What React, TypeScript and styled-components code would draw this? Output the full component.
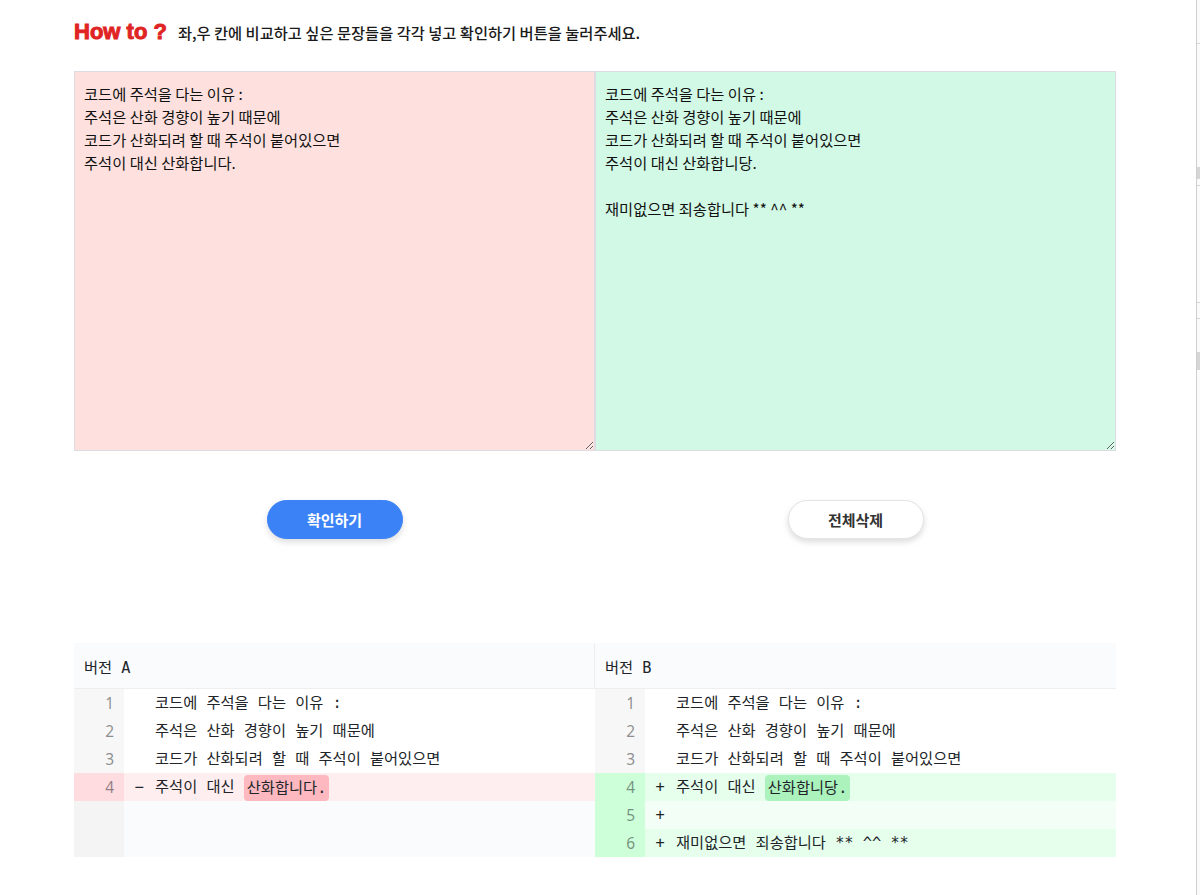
import React from "react";
import styled, { createGlobalStyle } from "styled-components";

const GlobalStyle = createGlobalStyle`
  html, body { margin: 0; padding: 0; background: #ffffff; }
  body {
    font-family: "Noto Sans CJK KR", "Noto Sans", sans-serif;
    color: #111111;
  }
  * { box-sizing: border-box; }
`;

const Page = styled.main`
  width: 1042px;
  margin-left: 74px;
  padding-top: 20px;
`;

const TitleRow = styled.header`
  display: flex;
  align-items: baseline;
  gap: 11px;
  height: 24px;
  margin-bottom: 27px;
`;

const HowTo = styled.h1`
  margin: 0;
  font-family: "Liberation Sans", Arial, sans-serif;
  font-weight: 700;
  font-size: 22px;
  line-height: 24px;
  color: #e02424;
  -webkit-text-stroke: 1px #e02424;
  letter-spacing: 0px;
`;

const Guide = styled.p`
  margin: 0;
  font-family: "Noto Sans CJK KR", sans-serif;
  font-size: 15.3px;
  font-weight: 500;
  color: #1a1a1a;
`;

const Editors = styled.section`
  display: grid;
  grid-template-columns: 1fr 1fr;
  height: 380px;
`;

const Editor = styled.textarea<{ $tone: "red" | "green" }>`
  display: block;
  width: 100%;
  height: 100%;
  margin: 0;
  padding: 10px 9px;
  border: 1px solid #dcdce2;
  outline: none;
  resize: both;
  background: ${(p) => (p.$tone === "red" ? "#fee1de" : "#d1f9e6")};
  font-family: "Noto Sans CJK KR", sans-serif;
  font-size: 15.3px;
  line-height: 23px;
  color: #111111;
`;

const Actions = styled.div`
  display: grid;
  grid-template-columns: 1fr 1fr;
  justify-items: center;
  padding-top: 49px;
`;

const PillButton = styled.button<{ $primary?: boolean }>`
  width: 136px;
  height: 39px;
  border-radius: 20px;
  border: 1px solid ${(p) => (p.$primary ? "#3b82f6" : "#e4e4e7")};
  background: ${(p) => (p.$primary ? "#3b82f6" : "#ffffff")};
  color: ${(p) => (p.$primary ? "#ffffff" : "#333333")};
  font-family: "Noto Sans CJK KR", sans-serif;
  font-size: 15px;
  font-weight: 700;
  box-shadow: 0 3px 6px rgba(0, 0, 0, 0.14);
  cursor: pointer;
`;

const Diff = styled.section`
  margin-top: 104px;
  display: grid;
  grid-template-columns: 50px 28px 1fr 50px 28px 1fr;
  font-family: "DejaVu Sans Mono", "Noto Sans CJK KR", monospace;
  font-size: 15.3px;
  color: #212529;
`;

const TitleCell = styled.div<{ $divider?: boolean }>`
  grid-column: span 3;
  height: 46px;
  display: flex;
  align-items: center;
  padding-left: 10px;
  background: #fafbfc;
  border-bottom: 1px solid #eeeeee;
  border-right: ${(p) => (p.$divider ? "1px solid #eeeeee" : "none")};
`;

type Kind = "same" | "removed" | "added" | "addedEmpty" | "empty";

const gutterBg: Record<Kind, string> = {
  same: "#f7f7f7",
  removed: "#ffdce0",
  added: "#cdffd8",
  addedEmpty: "#cdffd8",
  empty: "#f4f4f4",
};

const lineBg: Record<Kind, string> = {
  same: "#ffffff",
  removed: "#ffeef0",
  added: "#e6ffed",
  addedEmpty: "#f3fff6",
  empty: "#fafbfc",
};

const Gutter = styled.div<{ $kind: Kind }>`
  height: 28px;
  line-height: 28px;
  padding-right: 10px;
  text-align: right;
  font-family: "Noto Sans", "DejaVu Sans", sans-serif;
  font-size: 15.5px;
  background: ${(p) => gutterBg[p.$kind]};
  color: rgba(33, 37, 41, 0.5);
`;

const Marker = styled.div<{ $kind: Kind }>`
  height: 28px;
  line-height: 28px;
  text-align: center;
  padding-left: 2px;
  background: ${(p) => lineBg[p.$kind]};
`;

const Content = styled.div<{ $kind: Kind }>`
  height: 28px;
  line-height: 28px;
  padding-left: 3px;
  white-space: pre;
  overflow: hidden;
  background: ${(p) => lineBg[p.$kind]};
`;

const Word = styled.span<{ $tone: "red" | "green" }>`
  display: inline-block;
  line-height: 22px;
  padding: 2px 3px;
  border-radius: 4px;
  vertical-align: middle;
  background: ${(p) => (p.$tone === "red" ? "#fdb8c0" : "#acf2bd")};
`;

const EdgeStrip = styled.div`
  position: fixed;
  top: 0;
  right: 0;
  width: 4px;
  height: 100%;
  border-left: 1px solid #cfcfcf;
  background: #fbfbfb;
`;

const EdgeMark = styled.div<{ $top: number; $h: number }>`
  position: absolute;
  left: 0;
  right: 0;
  top: ${(p) => p.$top}px;
  height: ${(p) => p.$h}px;
  background: #d6d6d6;
`;

const leftText = `코드에 주석을 다는 이유 :
주석은 산화 경향이 높기 때문에
코드가 산화되려 할 때 주석이 붙어있으면
주석이 대신 산화합니다.`;

const rightText = `코드에 주석을 다는 이유 :
주석은 산화 경향이 높기 때문에
코드가 산화되려 할 때 주석이 붙어있으면
주석이 대신 산화합니당.

재미없으면 죄송합니다 ** ^^ **`;

type Side = { n?: number; mark?: string; kind: Kind; text?: React.ReactNode };

const rows: { l: Side; r: Side }[] = [
  { l: { n: 1, kind: "same", text: "코드에 주석을 다는 이유 :" }, r: { n: 1, kind: "same", text: "코드에 주석을 다는 이유 :" } },
  { l: { n: 2, kind: "same", text: "주석은 산화 경향이 높기 때문에" }, r: { n: 2, kind: "same", text: "주석은 산화 경향이 높기 때문에" } },
  { l: { n: 3, kind: "same", text: "코드가 산화되려 할 때 주석이 붙어있으면" }, r: { n: 3, kind: "same", text: "코드가 산화되려 할 때 주석이 붙어있으면" } },
  {
    l: { n: 4, mark: "−", kind: "removed", text: <>주석이 대신 <Word $tone="red">산화합니다.</Word></> },
    r: { n: 4, mark: "+", kind: "added", text: <>주석이 대신 <Word $tone="green">산화합니당.</Word></> },
  },
  { l: { kind: "empty" }, r: { n: 5, mark: "+", kind: "addedEmpty", text: "" } },
  { l: { kind: "empty" }, r: { n: 6, mark: "+", kind: "added", text: "재미없으면 죄송합니다 ** ^^ **" } },
];

const SideCells = ({ s }: { s: Side }) => (
  <>
    <Gutter $kind={s.kind}>{s.n ?? ""}</Gutter>
    <Marker $kind={s.kind}>{s.mark ?? ""}</Marker>
    <Content $kind={s.kind}>{s.text ?? ""}</Content>
  </>
);

export default function App() {
  return (
    <>
      <GlobalStyle />
      <Page>
        <TitleRow>
          <HowTo>How to ?</HowTo>
          <Guide>좌,우 칸에 비교하고 싶은 문장들을 각각 넣고 확인하기 버튼을 눌러주세요.</Guide>
        </TitleRow>
        <Editors>
          <Editor $tone="red" defaultValue={leftText} spellCheck={false} />
          <Editor $tone="green" defaultValue={rightText} spellCheck={false} />
        </Editors>
        <Actions>
          <PillButton $primary>확인하기</PillButton>
          <PillButton>전체삭제</PillButton>
        </Actions>
        <Diff>
          <TitleCell $divider>버전 A</TitleCell>
          <TitleCell>버전 B</TitleCell>
          {rows.map((row, i) => (
            <React.Fragment key={i}>
              <SideCells s={row.l} />
              <SideCells s={row.r} />
            </React.Fragment>
          ))}
        </Diff>
      </Page>
      <EdgeStrip>
        <EdgeMark $top={43} $h={1} />
        <EdgeMark $top={167} $h={12} />
        <EdgeMark $top={185} $h={1} />
        <EdgeMark $top={302} $h={1} />
        <EdgeMark $top={318} $h={1} />
        <EdgeMark $top={352} $h={18} />
      </EdgeStrip>
    </>
  );
}
